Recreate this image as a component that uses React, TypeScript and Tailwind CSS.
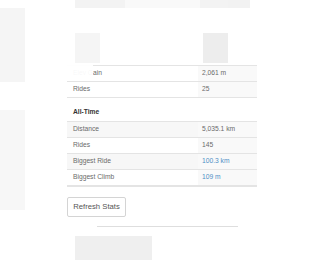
import React from "react";

const recent = [
  { label: "Elev Gain", value: "2,061 m" },
  { label: "Rides", value: "25" },
];

const allTime = [
  { label: "Distance", value: "5,035.1 km" },
  { label: "Rides", value: "145" },
  { label: "Biggest Ride", value: "100.3 km", link: true },
  { label: "Biggest Climb", value: "109 m", link: true },
];

function Row({ label, value, link, striped }: { label: string; value: string; link?: boolean; striped?: boolean }) {
  return (
    <div className={`flex h-[16px] items-center border-t border-[#e4e4e4] ${striped ? "bg-[#f7f7f7]" : ""}`}>
      <div className="w-[131px] pl-[6px] text-[#6a6a6a]">{label}</div>
      <div className={`flex h-full flex-1 items-center bg-[#f9f9f9] pl-[4px] ${link ? "text-[#4f8fc6]" : "text-[#6a6a6a]"}`}>
        {value}
      </div>
    </div>
  );
}

export default function App() {
  return (
    <div className="relative flex h-[260px] w-[320px] overflow-hidden bg-white font-['Liberation_Sans',Arial,sans-serif]">
      {/* left mosaic strip */}
      <div className="flex w-[25px] flex-col">
        <div className="h-[8px]" />
        <div className="h-[74px] bg-[#f5f5f5]" />
        <div className="h-[28px]" />
        <div className="h-[100px] bg-[#f7f7f7]" />
      </div>

      <div className="flex flex-1 flex-col pl-[42px]">
        {/* top mosaic */}
        <div className="flex h-[65px] flex-col">
          <div className="flex h-[8px]">
            <div className="ml-[8px] w-[50px] bg-[#f3f3f3]" />
            <div className="w-[75px] bg-[#f9f9f9]" />
            <div className="w-[28px] bg-[#f3f3f3]" />
            <div className="w-[22px] bg-[#f2f2f2]" />
          </div>
          <div className="mt-[25px] flex h-[30px]">
            <div className="ml-[8px] w-[25px] bg-[#f5f5f5]" />
            <div className="w-[103px]" />
            <div className="w-[25px] bg-[#ededed]" />
          </div>
        </div>

        {/* stats table */}
        <div className="w-[190px] text-[6.7px] leading-none">
          {recent.map((r) => (
            <Row key={r.label} {...r} />
          ))}
          <div className="flex h-[24px] items-end border-t border-[#e4e4e4] pb-[5px]">
            <div className="w-[131px] pl-[6px] font-bold text-[#333]">All-Time</div>
          </div>
          {allTime.map((r, i) => (
            <Row key={r.label} {...r} striped={i % 2 === 0} />
          ))}
          <div className="border-t-2 border-[#e4e4e4]" />
        </div>

        <button className="mt-[10px] h-[20px] w-[59px] rounded-[2px] border border-[#d4d4d4] bg-white text-[7.7px] text-[#555]">
          Refresh Stats
        </button>

        <div className="ml-[30px] mt-[9px] w-[141px] border-t border-[#dedede]" />
        <div className="mt-[9px] ml-[8px] h-[24px] w-[77px] bg-[#efefef]" />
      </div>

      {/* mosaic patch covering the first label */}
      <div className="absolute left-[67px] top-[63px] h-[17px] w-[26px] bg-white/95" />
    </div>
  );
}
